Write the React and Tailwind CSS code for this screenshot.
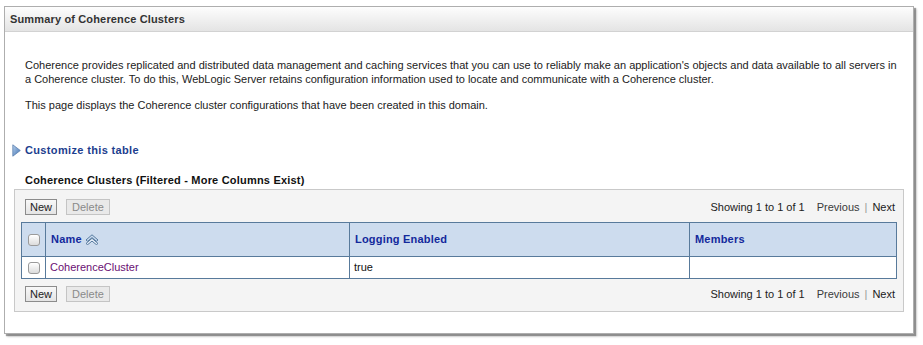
import React from 'react'

const FONT = { fontFamily: '"Liberation Sans", Arial, sans-serif' }

function Checkbox() {
  return (
    <span className="inline-block w-[12px] h-[12px] rounded-[3px] border border-[#9a9a9a] bg-gradient-to-b from-white to-[#dcdcdc] shadow-[inset_0_1px_0_#fff]" />
  )
}

function SortIcon() {
  return (
    <svg width="14" height="11" viewBox="0 0 14 11" className="ml-[3px]">
      <path d="M1 6 L7 0.8 L13 6 L11.3 7.3 L7 3.6 L2.7 7.3 Z" fill="#c9dbef" stroke="#4a6f95" strokeWidth="0.9" strokeLinejoin="round" />
      <path d="M1 9.5 L7 4.3 L13 9.5 L11.3 10.6 L7 7.1 L2.7 10.6 Z" fill="#e6eef8" stroke="#4a6f95" strokeWidth="0.9" strokeLinejoin="round" />
    </svg>
  )
}

function Toolbar() {
  return (
    <div className="flex items-center justify-between h-[16px] pl-[4px] pr-[2px]">
      <div className="flex items-center gap-[9px]">
        <button className="h-[16px] px-[4px] text-[11px] leading-[14px] text-[#222] bg-gradient-to-b from-[#f8f8f8] to-[#e4e4e4] border border-[#8c8c8c]">New</button>
        <button className="h-[16px] px-[5px] text-[11px] leading-[14px] text-[#8a8a8a] bg-[#e9e9e9] border border-[#c4c4c4]">Delete</button>
      </div>
      <div className="flex items-center text-[11px] text-[#222]">
        <span>Showing 1 to 1 of 1</span>
        <span className="ml-[12px] text-[#3a3a3a]">Previous</span>
        <span className="mx-[5px] text-[#999]">|</span>
        <span className="text-[#1a1a1a]">Next</span>
      </div>
    </div>
  )
}

export default function App() {
  return (
    <div className="w-[923px] h-[345px] bg-white pt-[6px] pl-[4px]" style={FONT}>
      <div className="w-[910px] h-[328px] border border-[#aeaeae] bg-white shadow-[2px_2px_1px_rgba(0,0,0,0.35),3px_3px_2px_rgba(0,0,0,0.15)]">
        <div className="h-[25px] flex items-center px-[5px] bg-gradient-to-b from-[#fdfdfd] to-[#e4e4e4] border-b border-[#d2d2d2]">
          <span className="text-[11px] font-bold text-[#333] tracking-[0.15px]">Summary of Coherence Clusters</span>
        </div>

        <div className="pl-[20px] pr-[10px] text-[11px] text-[#222]">
          <p className="pt-[26px] leading-[14px]">
            Coherence provides replicated and distributed data management and caching services that you can use to reliably make an application's objects and data available to all servers in a Coherence cluster. To do this, WebLogic Server retains configuration information used to locate and communicate with a Coherence cluster.
          </p>
          <p className="mt-[12px] leading-[14px]">
            This page displays the Coherence cluster configurations that have been created in this domain.
          </p>

          <div className="mt-[31px] ml-[-13px] flex items-center h-[14px] gap-[4px]">
            <svg width="9" height="13" viewBox="0 0 9 13">
              <defs>
                <linearGradient id="tri" x1="0" y1="0" x2="1" y2="1">
                  <stop offset="0" stopColor="#b9d2ee" />
                  <stop offset="1" stopColor="#3d6fb0" />
                </linearGradient>
              </defs>
              <path d="M0.8 0.8 L8.3 6.5 L0.8 12.2 Z" fill="url(#tri)" stroke="#5a7fae" strokeWidth="0.8" strokeLinejoin="round" />
            </svg>
            <span className="font-bold text-[#1c3e8e] tracking-[0.35px]">Customize this table</span>
          </div>

          <div className="mt-[16px] h-[14px] leading-[14px] font-bold text-[#111] tracking-[0.2px]">
            Coherence Clusters (Filtered - More Columns Exist)
          </div>

          <div className="mt-[2px] ml-[-11px] w-[890px] border border-[#c9c9c9] bg-[#f4f4f4] px-[6px] pt-[9px] pb-[9px]">
            <Toolbar />
            <table className="mt-[7px] w-[876px] border-collapse border border-[#587a9b] table-fixed">
              <colgroup>
                <col className="w-[24px]" />
                <col className="w-[304px]" />
                <col className="w-[340px]" />
                <col />
              </colgroup>
              <thead>
                <tr className="h-[34px] bg-[#cddcee]">
                  <th className="border border-[#587a9b] text-center align-middle">
                    <div className="flex justify-center"><Checkbox /></div>
                  </th>
                  <th className="border border-[#587a9b] text-left px-[5px] font-bold text-[#13299c] tracking-[0.2px]">
                    <div className="flex items-center">Name<SortIcon /></div>
                  </th>
                  <th className="border border-[#587a9b] text-left px-[5px] font-bold text-[#13299c] tracking-[0.2px]">Logging Enabled</th>
                  <th className="border border-[#587a9b] text-left px-[5px] font-bold text-[#13299c] tracking-[0.2px]">Members</th>
                </tr>
              </thead>
              <tbody>
                <tr className="h-[22px] bg-white">
                  <td className="border border-[#587a9b]">
                    <div className="flex justify-center"><Checkbox /></div>
                  </td>
                  <td className="border border-[#587a9b] px-[4px] text-[#6a0f73]">CoherenceCluster</td>
                  <td className="border border-[#587a9b] px-[4px] text-[#111]">true</td>
                  <td className="border border-[#587a9b] px-[4px]"></td>
                </tr>
              </tbody>
            </table>
            <div className="mt-[7px]">
              <Toolbar />
            </div>
          </div>
        </div>
      </div>
    </div>
  )
}
